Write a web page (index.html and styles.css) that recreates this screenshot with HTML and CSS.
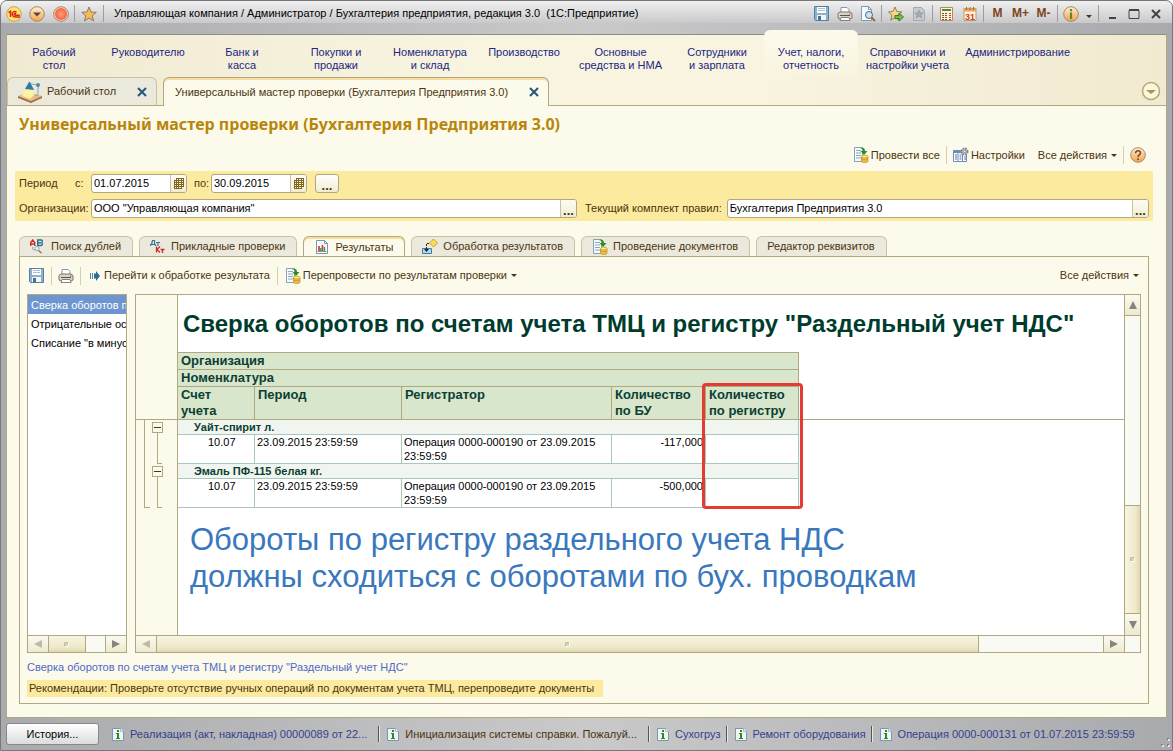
FILE: index.html
```html
<!DOCTYPE html>
<html lang="ru">
<head>
  <meta charset="UTF-8">
  <meta name="viewport" content="width=device-width, initial-scale=1.0">
  <title>Бухгалтерия предприятия, редакция 3.0</title>
  <link rel="stylesheet" href="styles.css">
</head>
<body>
  <!-- иконки -->
  <svg class="sprite" aria-hidden="true">
    <defs>
      <linearGradient id="orange" x1="0" y1="0" x2="0" y2="1">
        <stop offset="0" stop-color="#fff0d4"/>
        <stop offset="1" stop-color="#f2a24c"/>
      </linearGradient>
      <radialGradient id="red">
        <stop offset="0" stop-color="#ffa27c"/>
        <stop offset="1" stop-color="#f2623c"/>
      </radialGradient>
    </defs>
    <symbol id="i-save" viewBox="0 0 16 16">
      <path d="M.5.500h14v14h-13l-1-1z" fill="#8fb2cb" stroke="#54809f"/>
      <path d="M3 1h9v6H3z" fill="#fff"/>
      <path d="M4 2.500h7M4 4.500h7" stroke="#a9bfcd"/>
      <path d="M3 9h9v5H3z" fill="#f2f6f8"/>
      <path d="M4 10h3v4H4z" fill="#47718f"/>
    </symbol>
    <symbol id="i-print" viewBox="0 0 16 16">
      <path d="M4 7V1.500h6l2 2V7" fill="#fff" stroke="#8799a8"/>
      <path d="M1 7.500 3 6h10l2 1.500V12l-2 1H3l-2-1z" fill="#d9d4cc" stroke="#7b746c"/>
      <path d="M3 9.500h10" stroke="#5b534c"/>
      <path d="M4 11.500h8l1 3H3z" fill="#fff" stroke="#8a8178"/>
      <path d="M12 8h1.500" stroke="#d0502a"/>
    </symbol>
    <symbol id="i-preview" viewBox="0 0 16 16">
      <path d="M1.500 .5h7l3 3v11h-10z" fill="#f5fafe" stroke="#7d9db5"/>
      <path d="M8.500.5v3h3" fill="none" stroke="#7d9db5"/>
      <circle cx="9" cy="9" r="3.500" fill="#cfe4f2" stroke="#4a6c88"/>
      <path d="m11.500 11.500 3.500 3.500" stroke="#a0643c" stroke-width="2"/>
    </symbol>
    <symbol id="i-star" viewBox="0 0 16 16">
      <path d="m8 1 2 5 5.300.4-4.100 3.400 1.400 5.200L8 12l-4.600 3 1.400-5.200L.7 6.400 6 6z" fill="#f8b95c" stroke="#8f7c5c"/>
    </symbol>
    <symbol id="i-favadd" viewBox="0 0 16 16">
      <path d="m7 1 1.800 4.500 5 .4-4 3.300 1.400 5L7 11.500l-4.200 2.700 1.200-5L.5 6 5 5.500z" fill="#fbd58b" stroke="#9c7b48"/>
      <path d="M7 9.500h4V7l4.500 4-4.500 4v-2.500H7z" fill="#72c043" stroke="#3a7f22"/>
    </symbol>
    <symbol id="i-favlist" viewBox="0 0 16 16">
      <path d="M2.500 1.500h8l3 3v10h-11z" fill="#c5cbd0" stroke="#a3abb2"/>
      <path d="m8 4 1.200 2.800 3 .2-2.300 2 .8 3L8 10.300 5.300 12l.8-3-2.300-2 3-.2z" fill="#a9a9a9" stroke="#8f949a" stroke-width=".6"/>
    </symbol>
    <symbol id="i-calc" viewBox="0 0 16 16">
      <path d="M1.500 1.500h12v13h-12z" fill="#fdf6dc" stroke="#a98e62"/>
      <path d="M3 3h9v2H3z" fill="#4c8d34"/>
      <path d="M3 7.500h6M3 9.500h6M3 11.500h6M3 13.500h6" stroke="#7a5230" stroke-dasharray="2 1"/>
      <path d="M10 7.500h2M10 9.500h2M10 11.500h2M10 13.500h2" stroke="#cc3c20"/>
    </symbol>
    <symbol id="i-calendar" viewBox="0 0 16 16">
      <path d="M2 2.500h12v12H2z" fill="#fff6e0" stroke="#bd9a68"/>
      <path d="M2 2.500h12v3H2z" fill="#e9a45c"/>
      <path d="M4.500 1v3m3.500-3v3m3.500-3v3" stroke="#9c6b34"/>
      <text x="8" y="13.500" text-anchor="middle" font-size="9" font-weight="bold" fill="#d8401c">31</text>
    </symbol>
    <symbol id="i-info" viewBox="0 0 16 16">
      <circle cx="8" cy="8" r="7.300" fill="url(#orange)" stroke="#a88960"/>
      <path d="M8 3v2.200M8 6.500V13" stroke="#5a8a2c" stroke-width="2.200"/>
    </symbol>
    <symbol id="i-help" viewBox="0 0 16 16">
      <circle cx="8" cy="8" r="7.300" fill="url(#orange)" stroke="#ab8a68"/>
      <path d="M5.500 6.300c0-3.400 5-3.400 5-.4 0 2-2.500 1.800-2.500 4M8 11.200V13" fill="none" stroke="#7d4c22" stroke-width="1.600"/>
    </symbol>
    <symbol id="i-logo" viewBox="0 0 16 16">
      <circle cx="8" cy="8" r="7.300" fill="#ffe76a" stroke="#c8a060"/>
      <path d="m2.500 6.500 2-1.200V11M10.500 6.300C9 4.800 6.300 5.500 6.300 8c0 2.500 2 3 3.700 3h4M10.200 7.800C9.200 7.300 8.300 7.500 8.300 8.300c0 .9.700 1 1.500 1h4" fill="none" stroke="#d8261c" stroke-width="1.500"/>
    </symbol>
    <symbol id="i-menu" viewBox="0 0 16 16">
      <circle cx="8" cy="8" r="7.300" fill="url(#orange)" stroke="#a08a6c"/>
      <path d="M4 6.500h8L8 10.500z" fill="#5c4a3c"/>
    </symbol>
    <symbol id="i-stop" viewBox="0 0 16 16">
      <circle cx="8" cy="8" r="7.300" fill="#ffdcc8" stroke="#a4826c"/>
      <circle cx="8" cy="8" r="6" fill="url(#red)"/>
    </symbol>
    <symbol id="i-desk" viewBox="0 0 24 22">
      <path d="m0 15 11-4 13 4-11 5z" fill="#e8bd84"/>
      <path d="m0 15 13 5 11-5v2l-11 5-13-5z" fill="#a06e42"/>
      <path d="M9 7 4 15l8 3 4-4-2-7z" fill="#fff2a0"/>
      <path d="m11 1 1 0 4 8-9-1z" fill="#2f7ba6"/>
      <path d="m13 3 7 1v10l-3 1" fill="none" stroke="#8ba4b4"/>
      <circle cx="20" cy="4" r="2" fill="#4f8cb4"/>
    </symbol>
    <symbol id="i-post" viewBox="0 0 16 16">
      <path d="M1.500.5h8v14h-8z" fill="#f6fafc" stroke="#86a4b8"/>
      <path d="M3 3.500h5M3 6h5M3 8.500h5M3 11h5" stroke="#89a9c0"/>
      <path d="M7 1c3-1 5 0 5 3h2.500L11 8 7.500 4H10c0-2-1-2.500-3-3z" fill="#2e8b28"/>
      <path d="M8.500 9.500v4.500c0 2 6.500 2 6.500 0V9.500" fill="#f4c338" stroke="#b98a20" stroke-width=".7"/>
      <ellipse cx="11.750" cy="9.500" rx="3.250" ry="1.400" fill="#fff08c" stroke="#b98a20" stroke-width=".7"/>
      <path d="M8.500 11.800c1 1.400 5.500 1.400 6.500 0" fill="none" stroke="#b98a20" stroke-width=".7"/>
    </symbol>
    <symbol id="i-setup" viewBox="0 0 16 16">
      <path d="M.5 3.500h13v11H.5z" fill="#fff" stroke="#6d8db4"/>
      <path d="M.5 4h13v2H.5z" fill="#6d8db4"/>
      <path d="M5 4v11M9.500 4v11" stroke="#6d8db4"/>
      <path d="M2 8h2M2 10h2M2 12h2M6.500 8h2M6.500 10h2M6.500 12h2M11 10h2M11 12h2" stroke="#4e74a6"/>
      <circle cx="11.500" cy="4.500" r="3" fill="#d2d2d8" stroke="#85858f" stroke-width="2" stroke-dasharray="1.600 .8"/>
      <circle cx="11.500" cy="4.500" r="1.200" fill="#fff" stroke="#85858f"/>
    </symbol>
    <symbol id="i-dupes" viewBox="0 0 16 16">
      <path d="M.7 7V3.500L2.700 1l2 2.500V7M.7 5h4" fill="none" stroke="#cc2c24" stroke-width="1.400"/>
      <path d="M7.700 1v5.500H11q2 0 1-2.700Q13 1 11 1H7M7.700 3.700H11" fill="none" stroke="#2c6c94" stroke-width="1.400"/>
      <path d="M2.500 8v1.500q0 1.500 3 1.500" fill="none" stroke="#8c9cac"/>
      <circle cx="7" cy="9.500" r="2.200" fill="#e0ebf4" stroke="#9cacbc"/>
      <path d="m8.500 11.500 3 2.500" stroke="#a4704c" stroke-width="1.600"/>
    </symbol>
    <symbol id="i-dtkt" viewBox="0 0 16 16">
      <path d="M.5 7V5.500h5V7M1.500 5.500 2.500 1.500h2v4M6 3.500h4M8 3.500v3.500" fill="none" stroke="#3e7394" stroke-width="1.200"/>
      <path d="M6.500 7.500v6M10 7.500l-3 3 3 3M10.500 10.500h4M12.500 10.500V14" fill="none" stroke="#c2342a" stroke-width="1.300"/>
    </symbol>
    <symbol id="i-report" viewBox="0 0 14 16">
      <path d="M1.500 1.500h8l3 3v10h-11z" fill="#f8fbfe" stroke="#7797ae"/>
      <path d="M9.500 1.500v3h3" fill="none" stroke="#7797ae"/>
      <path d="M4 7v5M7.500 6v6" stroke="#d03c30" stroke-width="1.700"/>
      <path d="M5.800 9v3M9.500 8v4" stroke="#4a9c3c" stroke-width="1.500"/>
      <path d="M2.500 12.500h9" stroke="#7797ae"/>
    </symbol>
    <symbol id="i-process" viewBox="0 0 16 16">
      <path d="m11.500 0 4 4-4 4-4-4z" fill="#ffd950" stroke="#bb9630" stroke-width=".8"/>
      <path d="M.5 9.500h9v5h-9z" fill="#b3d9ee" stroke="#3b7eab"/>
      <path d="M7 4.500H4.500V11" fill="none" stroke="#222" stroke-dasharray="2 1"/>
      <path d="M2 10h5l-2.500 3z" fill="#222"/>
    </symbol>
    <symbol id="i-goto" viewBox="0 0 12 12">
      <path d="M1.500 3v6M3.500 3v6" stroke="#4e84a9"/>
      <path d="M5 3.500h2V1l4 5-4 5V8.500H5z" fill="#2b6c99"/>
    </symbol>
    <symbol id="i-doc" viewBox="0 0 12 13">
      <path d="M.5.500h8l3 3v9H.5z" fill="#edf5fa" stroke="#7b98ab"/>
      <path d="M8.500.5v3h3" fill="#fff" stroke="#a4bbc9"/>
      <path d="M5 2h2v2H5zM4 5h3v5h1v1H4v-1h1V6H4z" fill="#35871c"/>
    </symbol>
    <symbol id="i-grid" viewBox="0 0 12 12">
      <path d="M3.500.5h7v8h-2v2h-8v-8h3z" fill="#fdf8dc"/>
      <path d="M3 .5h8M1 2.500h10M1 4.500h10M1 6.500h10M1 8.500h10M1 10.500h8M1.500 2v9M3.500 0v11M5.500 0v11M8.500 0v11M10.500 0v9" fill="none" stroke="#7d6423"/>
    </symbol>
    <symbol id="i-close" viewBox="0 0 10 10">
      <path d="m1 1 8 8M9 1 1 9" stroke="#24577a" stroke-width="2"/>
    </symbol>
    <symbol id="i-down" viewBox="0 0 20 20">
      <circle cx="10" cy="10" r="8.500" fill="#fbf6d8" stroke="#b3a876" stroke-width="1.500"/>
      <path d="M5 9h10l-5 4z" fill="#a3975c"/>
    </symbol>
    <symbol id="i-arrow" viewBox="0 0 8 8">
      <path d="M0 0l8 4-8 4z" fill="currentColor"/>
    </symbol>
  </svg>

  <div class="window">
    <header class="titlebar">
      <button class="tb" aria-label="1С"><svg><use href="#i-logo"/></svg></button>
      <button class="tb wide" aria-label="Меню"><svg><use href="#i-menu"/></svg></button>
      <button class="tb" aria-label="Стоп"><svg><use href="#i-stop"/></svg></button>
      <span class="tb-sep"></span>
      <button class="tb wide" aria-label="Избранное"><svg><use href="#i-star"/></svg></button>
      <span class="tb-sep"></span>
      <h1 class="caption">Управляющая компания / Администратор / Бухгалтерия предприятия, редакция 3.0&nbsp; (1С:Предприятие)</h1>
      <button class="tb" aria-label="Сохранить"><svg><use href="#i-save"/></svg></button>
      <button class="tb" aria-label="Печать"><svg><use href="#i-print"/></svg></button>
      <button class="tb" aria-label="Просмотр"><svg><use href="#i-preview"/></svg></button>
      <span class="tb-sep"></span>
      <button class="tb" aria-label="Добавить в избранное"><svg><use href="#i-favadd"/></svg></button>
      <button class="tb" aria-label="Список избранного"><svg><use href="#i-favlist"/></svg></button>
      <span class="tb-sep"></span>
      <button class="tb" aria-label="Калькулятор"><svg><use href="#i-calc"/></svg></button>
      <button class="tb" aria-label="Календарь"><svg><use href="#i-calendar"/></svg></button>
      <span class="tb-sep"></span>
      <button class="tb mem">M</button>
      <button class="tb mem">M+</button>
      <button class="tb mem">M-</button>
      <span class="tb-sep"></span>
      <button class="tb narrow" aria-label="Информация"><svg><use href="#i-info"/></svg></button>
      <button class="tb small" aria-label="Ещё"><span class="caret"></span></button>
      <span class="tb-sep"></span>
      <button class="tb win" aria-label="Свернуть"><svg viewBox="0 0 12 12"><path d="M3 10h7" stroke="#444" stroke-width="2"/></svg></button>
      <button class="tb win" aria-label="Развернуть"><svg viewBox="0 0 12 12"><path d="M1 2.500h10v8H1z" fill="none" stroke="#444"/><path d="M1 2h10" stroke="#444" stroke-width="2"/></svg></button>
      <button class="tb win" aria-label="Закрыть"><svg viewBox="0 0 12 12"><path d="m2 2 8 8M10 2l-8 8" stroke="#444" stroke-width="2"/></svg></button>
    </header>

    <div class="frame">
      <div class="top">
        <nav class="sections">
          <a href="#">Рабочий<br>стол</a>
          <a href="#">Руководителю</a>
          <a href="#">Банк и<br>касса</a>
          <a href="#">Покупки и<br>продажи</a>
          <a href="#">Номенклатура<br>и склад</a>
          <a href="#">Производство</a>
          <a href="#">Основные<br>средства и НМА</a>
          <a href="#">Сотрудники<br>и зарплата</a>
          <a href="#" class="active">Учет, налоги,<br>отчетность</a>
          <a href="#">Справочники и<br>настройки учета</a>
          <a href="#">Администрирование</a>
        </nav>
        <div class="windows">
          <div class="wtab">
            <svg class="desk"><use href="#i-desk"/></svg>
            <span>Рабочий стол</span>
            <button class="close" aria-label="Закрыть"><svg><use href="#i-close"/></svg></button>
          </div>
          <div class="wtab current">
            <span>Универсальный мастер проверки (Бухгалтерия Предприятия 3.0)</span>
            <button class="close" aria-label="Закрыть"><svg><use href="#i-close"/></svg></button>
          </div>
          <button class="collapse" aria-label="Показать"><svg><use href="#i-down"/></svg></button>
        </div>
      </div>

      <main class="page">
        <h2>Универсальный мастер проверки (Бухгалтерия Предприятия 3.0)</h2>

        <div class="commands">
          <button class="cmd"><svg><use href="#i-post"/></svg>Провести все</button>
          <span class="sep"></span>
          <button class="cmd"><svg><use href="#i-setup"/></svg>Настройки</button>
          <button class="cmd all">Все действия<span class="caret"></span></button>
          <span class="sep"></span>
          <button class="cmd help" aria-label="Справка"><svg><use href="#i-help"/></svg></button>
        </div>

        <form class="filter">
          <div class="row">
            <span class="period">Период</span>
            <label for="from">с:</label>
            <div class="field date">
              <input id="from" type="text" value="01.07.2015">
              <button type="button" aria-label="Календарь"><svg><use href="#i-grid"/></svg></button>
            </div>
            <label for="to" class="to">по:</label>
            <div class="field date">
              <input id="to" type="text" value="30.09.2015">
              <button type="button" aria-label="Календарь"><svg><use href="#i-grid"/></svg></button>
            </div>
            <button type="button" class="dots">...</button>
          </div>
          <div class="row">
            <label for="org" class="org">Организации:</label>
            <div class="field grow-org">
              <input id="org" type="text" value='ООО "Управляющая компания"'>
              <button type="button" class="pick">...</button>
            </div>
            <label for="rules" class="rules">Текущий комплект правил:</label>
            <div class="field grow-rules">
              <input id="rules" type="text" value="Бухгалтерия Предприятия 3.0">
              <button type="button" class="pick">...</button>
            </div>
          </div>
        </form>

        <div class="tabs">
          <button class="tab"><svg><use href="#i-dupes"/></svg>Поиск дублей</button>
          <button class="tab"><svg><use href="#i-dtkt"/></svg>Прикладные проверки</button>
          <button class="tab current"><svg><use href="#i-report"/></svg>Результаты</button>
          <button class="tab"><svg><use href="#i-process"/></svg>Обработка результатов</button>
          <button class="tab"><svg><use href="#i-post"/></svg>Проведение документов</button>
          <button class="tab">Редактор реквизитов</button>
        </div>

        <section class="panel">
          <div class="tools">
            <button class="cmd icon" aria-label="Сохранить"><svg><use href="#i-save"/></svg></button>
            <span class="sep"></span>
            <button class="cmd icon" aria-label="Печать"><svg><use href="#i-print"/></svg></button>
            <span class="sep"></span>
            <button class="cmd goto"><svg><use href="#i-goto"/></svg>Перейти к обработке результата</button>
            <span class="sep"></span>
            <button class="cmd repost"><svg><use href="#i-post"/></svg>Перепровести по результатам проверки<span class="caret"></span></button>
            <button class="cmd right">Все действия<span class="caret"></span></button>
          </div>

          <div class="panes">
            <div class="list-pane">
              <ul>
                <li class="selected">Сверка оборотов по счетам учета ТМЦ</li>
                <li>Отрицательные остатки</li>
                <li>Списание "в минус"</li>
              </ul>
              <div class="hscroll">
                <button class="left off" aria-label="Влево"><svg><use href="#i-arrow"/></svg></button>
                <span class="thumb short"></span>
                <span class="track"></span>
                <button aria-label="Вправо"><svg><use href="#i-arrow"/></svg></button>
              </div>
            </div>

            <div class="sheet-pane">
              <div class="sheet-row">
                <div class="sheet">
                  <table>
                    <colgroup>
                      <col class="c-gutter"><col class="c-acc"><col class="c-period"><col class="c-reg"><col class="c-bu"><col class="c-qty"><col>
                    </colgroup>
                    <thead>
                      <tr class="title">
                        <td class="gutter frozen" rowspan="4"></td>
                        <th colspan="5"><span>Сверка оборотов по счетам учета ТМЦ и регистру "Раздельный учет НДС"</span></th>
                        <td></td>
                      </tr>
                      <tr class="h1"><th colspan="5">Организация</th><td></td></tr>
                      <tr class="h1"><th colspan="5">Номенклатура</th><td></td></tr>
                      <tr class="h2">
                        <th>Счет<br>учета</th>
                        <th>Период</th>
                        <th>Регистратор</th>
                        <th>Количество<br>по БУ</th>
                        <th class="marked">Количество<br>по регистру</th>
                        <td class="frozen"></td>
                      </tr>
                    </thead>
                    <tbody>
                      <tr class="group">
                        <td class="gutter tree" rowspan="4">
                          <div class="outer">
                            <div class="node"><button aria-label="Свернуть группу"></button></div>
                            <div class="node"><button aria-label="Свернуть группу"></button></div>
                          </div>
                        </td>
                        <th colspan="5">Уайт-спирит л.</th>
                        <td></td>
                      </tr>
                      <tr class="data">
                        <td class="acc">10.07</td><td>23.09.2015 23:59:59</td><td>Операция 0000-000190 от 23.09.2015 23:59:59</td><td class="num">-117,000</td><td></td><td></td>
                      </tr>
                      <tr class="group"><th colspan="5">Эмаль ПФ-115 белая кг.</th><td></td></tr>
                      <tr class="data">
                        <td class="acc">10.07</td><td>23.09.2015 23:59:59</td><td>Операция 0000-000190 от 23.09.2015 23:59:59</td><td class="num">-500,000</td><td></td><td></td>
                      </tr>
                      <tr class="rest">
                        <td class="gutter"></td>
                        <td colspan="6"><p>Обороты по регистру раздельного учета НДС<br>должны сходиться с оборотами по бух. проводкам</p></td>
                      </tr>
                    </tbody>
                  </table>
                </div>
                <div class="vscroll">
                  <button class="up" aria-label="Вверх"><svg><use href="#i-arrow"/></svg></button>
                  <span class="track"></span>
                  <span class="thumb"></span>
                  <button class="down" aria-label="Вниз"><svg><use href="#i-arrow"/></svg></button>
                </div>
              </div>
              <div class="hscroll">
                <button class="left off" aria-label="Влево"><svg><use href="#i-arrow"/></svg></button>
                <span class="thumb long"></span>
                <span class="track"></span>
                <button aria-label="Вправо"><svg><use href="#i-arrow"/></svg></button>
                <span class="corner"></span>
              </div>
            </div>
          </div>

          <a class="rule-link" href="#">Сверка оборотов по счетам учета ТМЦ и регистру "Раздельный учет НДС"</a>
          <p class="advice">Рекомендации: Проверьте отсутствие ручных операций по документам учета ТМЦ, перепроведите документы</p>
        </section>
      </main>
    </div>

    <footer class="status">
      <button class="history">История...</button>
      <a href="#" class="long"><svg><use href="#i-doc"/></svg>Реализация (акт, накладная) 00000089 от 22...</a>
      <a href="#" class="long msg"><svg><use href="#i-doc"/></svg>Инициализация системы справки. Пожалуй...</a>
      <a href="#"><svg><use href="#i-doc"/></svg>Сухогруз</a>
      <a href="#"><svg><use href="#i-doc"/></svg>Ремонт оборудования</a>
      <a href="#"><svg><use href="#i-doc"/></svg>Операция 0000-000131 от 01.07.2015 23:59:59</a>
      <svg class="grip" viewBox="0 0 12 12"><path d="M8 2h2v2H8zM2 8h2v2H2zM8 8h2v2H8z" fill="#7d7d80"/><path d="M9 3h2v2H9zM3 9h2v2H3zM9 9h2v2H9z" fill="#e4e4e6"/></svg>
    </footer>
  </div>
</body>
</html>
```
FILE: styles.css
```css
*,
*::before,
*::after {
  box-sizing: border-box;
}

body {
  margin: 0;
  font-family: "Liberation Sans", Arial, sans-serif;
  font-size: 11px;
  line-height: 13px;
  color: #4a3510;
  background: #fff;
}

button {
  font: inherit;
  color: inherit;
  margin: 0;
  padding: 0;
  border: none;
  background: none;
  white-space: nowrap;
}

a {
  text-decoration: none;
}

svg {
  width: 16px;
  height: 16px;
  flex: none;
  display: block;
}

.sprite {
  position: absolute;
  width: 0;
  height: 0;
}

.window {
  display: flex;
  flex-direction: column;
  min-height: 100vh;
  padding: 0 5px;
  border: 1px solid #77777a;
  border-radius: 7px 7px 0 0;
  background: linear-gradient(90deg, #a9aaad, #c9c9ca 50%, #a9aaad);
}

/* заголовок окна */
.titlebar {
  display: flex;
  align-items: center;
  height: 33px;
  margin: 0 -5px;
  padding: 0 5px 8px 1px;
  border-radius: 6px 6px 0 0;
  background: linear-gradient(#f0f0f1, #c9c9cb 22px, transparent 22px);
}

.tb {
  display: flex;
  align-items: center;
  justify-content: center;
  width: 23px;
  height: 20px;
  flex: none;
}

.tb.wide {
  width: 24px;
}

.tb.narrow {
  width: 22px;
}

.tb.small {
  width: 14px;
  padding-top: 6px;
}

.tb.win {
  width: 22px;
}

.tb.win svg {
  width: 12px;
  height: 12px;
}

.tb.mem {
  font-size: 12px;
  font-weight: bold;
  color: #7c4422;
}

.tb-sep {
  width: 1px;
  height: 17px;
  margin: 0 2px;
  background: #9d9da0;
}

.caption {
  flex: 1;
  min-width: 0;
  margin: 0 0 0 8px;
  font-size: 11px;
  font-weight: normal;
  color: #000;
  white-space: nowrap;
}

.caret {
  display: inline-block;
  border: 3px solid transparent;
  border-top-color: currentColor;
  border-bottom: none;
}

.frame {
  flex: 1;
  display: flex;
  flex-direction: column;
  border: 1px solid #b0a880;
  border-top-color: #8d8d86;
  background: #fcfaeb;
}

/* разделы */
.top {
  background: linear-gradient(90deg, #f1ead2, #f8f4e0 40%, #f8f4e0 65%, #f1ead0);
}

.sections {
  display: flex;
  height: 42px;
}

.sections a {
  min-width: 94px;
  padding: 11px 8px 0;
  text-align: center;
  color: #1c2683;
  white-space: nowrap;
}

.sections .active {
  margin-top: -5px;
  padding-top: 16px;
  border-radius: 6px 6px 0 0;
  background: linear-gradient(#fcfaeb, #f8f4e0);
}

.windows {
  display: flex;
  align-items: flex-end;
  height: 29px;
  border-bottom: 1px solid #b0a880;
}

.wtab {
  display: flex;
  align-items: center;
  height: 28px;
  padding: 0 9px 0 10px;
  margin-right: 6px;
  border: 1px solid #c9c3a4;
  border-bottom: none;
  border-radius: 6px 6px 0 0;
  background: #ebe9db;
}

.wtab.current {
  height: 29px;
  margin-bottom: -1px;
  padding-left: 11px;
  border-color: #b0a880;
  background: #fcfaeb;
  box-shadow: inset 0 2px #f8dca0;
}

.wtab .desk {
  width: 24px;
  height: 22px;
  margin-right: 5px;
}

.close {
  margin-left: 21px;
}

.close svg {
  width: 10px;
  height: 10px;
}

.collapse {
  margin: 0 5px 4px auto;
}

.collapse svg {
  width: 20px;
  height: 20px;
}

/* форма */
.page {
  flex: 1;
  display: flex;
  flex-direction: column;
  padding: 7px 13px 13px 8px;
}

h2 {
  margin: 0 4px;
  font-family: "Noto Sans", "Open Sans", sans-serif;
  font-size: 16px;
  line-height: 22px;
  color: #b8860b;
}

.commands {
  display: flex;
  align-items: center;
  justify-content: flex-end;
  height: 22px;
  margin: 9px 7px 5px 0;
}

.cmd {
  display: flex;
  align-items: center;
}

.cmd svg {
  margin-right: 2px;
}

.cmd .caret {
  margin-left: 4px;
}

.cmd.all {
  margin-left: 13px;
}

.cmd.help svg,
.cmd.icon svg {
  margin: 0;
}

.sep {
  width: 1px;
  height: 18px;
  margin: 0 6px;
  background: #d5cfb2;
}

.filter {
  padding: 3px 4px;
  background: #fcea9f;
}

.row {
  display: flex;
  align-items: center;
  height: 19px;
}

.row + .row {
  margin-top: 6px;
}

.period {
  width: 56px;
}

.row label {
  white-space: nowrap;
}

label[for="from"] {
  width: 16px;
}

.row .to {
  width: 17px;
  margin-left: 7px;
}

.org {
  width: 72px;
}

.rules {
  margin: 0 5px 0 8px;
}

.field {
  display: flex;
  height: 19px;
  border: 1px solid #b0a880;
  border-radius: 3px;
  background: #fff;
  overflow: hidden;
}

.field.date {
  width: 96px;
}

.field input {
  flex: 1;
  min-width: 0;
  padding: 0 2px;
  border: none;
  outline: none;
  font: inherit;
  color: #000;
  background: none;
}

.field button {
  display: flex;
  align-items: center;
  justify-content: center;
  width: 16px;
  border-left: 1px solid #c9c3a4;
  background: linear-gradient(#fdfcf4, #f0ecd2);
}

.field .pick,
.dots {
  padding-top: 4px;
  font-size: 13px;
  font-weight: bold;
}

.field svg {
  width: 12px;
  height: 12px;
}

.grow-org {
  flex: 485;
}

.grow-rules {
  flex: 421;
}

.dots {
  width: 24px;
  height: 19px;
  margin-left: 8px;
  border: 1px solid #b0a880;
  border-radius: 3px;
  background: linear-gradient(#fff, #f0ecd2);
}

.tabs {
  display: flex;
  align-items: flex-end;
  margin: 15px 4px -1px;
}

.tab {
  display: flex;
  align-items: center;
  height: 20px;
  margin: 0 6px 1px 0;
  padding: 0 11px 0 10px;
  border: 1px solid #c9c3a4;
  border-bottom: none;
  border-radius: 6px 6px 0 0;
  background: #ebe9db;
}

.tab svg {
  margin-right: 5px;
}

.tab.current {
  height: 21px;
  margin-bottom: 0;
  border-color: #b0a880;
  background: #fcfaeb;
  box-shadow: inset 0 2px #f8dca0;
}

.panel {
  flex: 1;
  display: flex;
  flex-direction: column;
  margin: 0 4px;
  padding: 0 7px 6px;
  border: 1px solid #b0a880;
}

.tools {
  display: flex;
  align-items: center;
  height: 37px;
}

.tools .sep {
  margin: 0 4px;
}

.tools .icon {
  margin: 0 2px;
}

.tools .goto {
  margin: 0 3px 0 4px;
}

.tools .goto svg {
  width: 12px;
  height: 12px;
  margin-right: 3px;
}

.tools .repost {
  margin-left: 3px;
}

.tools .right {
  margin-left: auto;
  padding-right: 2px;
}

.panes {
  flex: 1;
  display: flex;
  gap: 8px;
}

.list-pane,
.sheet-pane {
  display: flex;
  flex-direction: column;
  border: 1px solid #b0a880;
  background: #fff;
}

.list-pane {
  width: 100px;
  flex: none;
}

.list-pane ul {
  flex: 1;
  margin: 0;
  padding: 0;
  list-style: none;
}

.list-pane li {
  height: 19px;
  padding-left: 3px;
  line-height: 20px;
  white-space: nowrap;
  overflow: hidden;
  color: #000;
}

.list-pane .selected {
  color: #fff;
  background: #6d96d0;
}

.sheet-pane {
  flex: 1;
  min-width: 0;
}

.sheet-row {
  flex: 1;
  display: flex;
}

.sheet {
  flex: 1;
  display: flex;
  min-width: 0;
  overflow: hidden;
}

/* полосы прокрутки */
.hscroll {
  display: flex;
  height: 17px;
  border-top: 1px solid #b0a880;
}

.hscroll button,
.vscroll button {
  display: flex;
  align-items: center;
  justify-content: center;
  flex: none;
  color: #85857e;
  background: linear-gradient(#fbfaf0, #eeeacf);
}

.hscroll button {
  width: 21px;
  border-left: 1px solid #b0a880;
}

.hscroll .left {
  border-left: none;
  border-right: 1px solid #b0a880;
}

.hscroll .off {
  color: #bdbaa6;
}

.hscroll svg,
.vscroll svg {
  width: 8px;
  height: 8px;
}

.hscroll .left svg {
  transform: scaleX(-1);
}

.vscroll .up svg {
  transform: rotate(-90deg);
}

.vscroll .down svg {
  transform: rotate(90deg);
}

.thumb {
  display: flex;
  align-items: center;
  justify-content: center;
}

.thumb::after {
  content: "";
  width: 5px;
  height: 5px;
  border: 1px solid #c0ba98;
  border-right-color: #fff;
  border-bottom-color: #fff;
  border-radius: 2px;
  background: #d8d2b4;
}

.hscroll .thumb {
  border-right: 1px solid #b0a880;
  background: linear-gradient(#f8f5df, #efe9cb 70%, #dfd8b2);
}

.hscroll .short {
  flex: 37;
}

.hscroll .short + .track {
  flex: 20;
}

.hscroll .long {
  flex: 823;
}

.track,
.hscroll .long + .track {
  flex: 124;
  background: #fafaf5;
}

.corner {
  width: 16px;
  border-left: 1px solid #b0a880;
  background: #fafaf5;
}

.vscroll {
  display: flex;
  flex-direction: column;
  width: 16px;
  border-left: 1px solid #b0a880;
}

.vscroll button {
  height: 21px;
}

.vscroll .up {
  border-bottom: 1px solid #b0a880;
}

.vscroll .track {
  flex: 191;
}

.vscroll .thumb {
  flex: 108;
  border-top: 1px solid #b0a880;
  border-bottom: 1px solid #b0a880;
  background: linear-gradient(90deg, #f8f5df, #efe9cb 70%, #dfd8b2);
}

/* табличный документ */
table {
  width: 100%;
  table-layout: fixed;
  border-collapse: separate;
  border-spacing: 0;
  font-size: 11px;
  line-height: 14px;
  color: #000;
}

th,
td {
  padding: 0;
  text-align: left;
  vertical-align: top;
}

.c-gutter { width: 42px; }
.c-acc { width: 77px; }
.c-period { width: 147px; }
.c-reg { width: 210px; }
.c-bu { width: 94px; }
.c-qty { width: 93px; }

.gutter {
  border-right: 1px solid #b0a880;
  background: #fcfaeb;
}

.frozen {
  border-bottom: 1px solid #b0a880;
}

.title th {
  height: 58px;
  padding: 14px 0 0 5px;
  border-bottom: 1px solid #b0a880;
  font-size: 24px;
  line-height: 30px;
  color: #003c2e;
  white-space: nowrap;
}

.h1 th,
.h2 th {
  padding-left: 3px;
  border-right: 1px solid #b0a880;
  border-bottom: 1px solid #b0a880;
  font-size: 13px;
  line-height: 16px;
  color: #0c3f33;
  background: #d8e6cc;
}

.h1 th {
  height: 17px;
}

.h2 th {
  height: 33px;
}

.h2 .marked {
  position: relative;
}

/* рамка вокруг колонки регистра */
.marked::after {
  content: "";
  position: absolute;
  top: -4px;
  left: -4px;
  width: 101px;
  height: 126px;
  border: 3px solid #e43c32;
  border-radius: 4px;
}

.group th {
  height: 15px;
  padding-left: 16px;
  border-right: 1px solid #a9c8bd;
  border-bottom: 1px solid #a9c8bd;
  color: #0c3f33;
  background: #f0f5f0;
}

.data td {
  height: 29px;
  padding-left: 2px;
  border-right: 1px solid #a9c8bd;
  border-bottom: 1px solid #a9c8bd;
}

.data td:last-child {
  border: none;
}

.data .acc {
  padding-left: 30px;
}

.data .num {
  padding-right: 2px;
  text-align: right;
}

.tree .outer {
  height: 88px;
  margin-left: 8px;
  border-left: 1px solid #b0a880;
  background: linear-gradient(#b0a880, #b0a880) 0 100% / 5px 1px no-repeat;
}

.node {
  height: 44px;
  margin-left: 12px;
  padding-top: 2px;
  background: linear-gradient(#b0a880, #b0a880) 0 100% / 5px 1px no-repeat, linear-gradient(#b0a880, #b0a880) 0 0 / 1px 100% no-repeat;
  background-clip: content-box;
  background-origin: content-box;
}

.node button {
  display: block;
  width: 11px;
  height: 11px;
  margin-left: -5px;
  border: 1px solid #b0a880;
  background: linear-gradient(#4a3510, #4a3510) center / 7px 1px no-repeat, #fcfaeb;
}

.rest p {
  margin: 13px 0 0 12px;
  font-size: 31px;
  line-height: 37px;
  color: #3a78bd;
  white-space: nowrap;
}

.rule-link {
  align-self: flex-start;
  margin-top: 8px;
  color: #5068c8;
}

.advice {
  align-self: flex-start;
  margin: 6px 0 0;
  padding: 2px 9px 2px 2px;
  background: #fcea9f;
}

/* строка состояния */
.status {
  display: flex;
  align-items: center;
  height: 32px;
}

.history {
  flex: none;
  width: 93px;
  height: 22px;
  margin-right: 5px;
  border: 1px solid #88888b;
  border-radius: 3px;
  background: linear-gradient(#fff, #dcdcde);
  color: #000;
}

.status a {
  display: flex;
  align-items: center;
  height: 16px;
  padding: 0 5px 0 8px;
  color: #34418c;
  white-space: nowrap;
}

.status .long {
  padding-right: 11px;
}

.status a + a {
  border-left: 1px solid #555;
  box-shadow: inset 1px 0 #e8e8e8;
}

.status a svg {
  width: 12px;
  height: 13px;
  margin-right: 6px;
}

.status .msg {
  color: #4a3510;
}

.grip {
  width: 12px;
  height: 12px;
  margin: auto -4px 2px auto;
}
```
